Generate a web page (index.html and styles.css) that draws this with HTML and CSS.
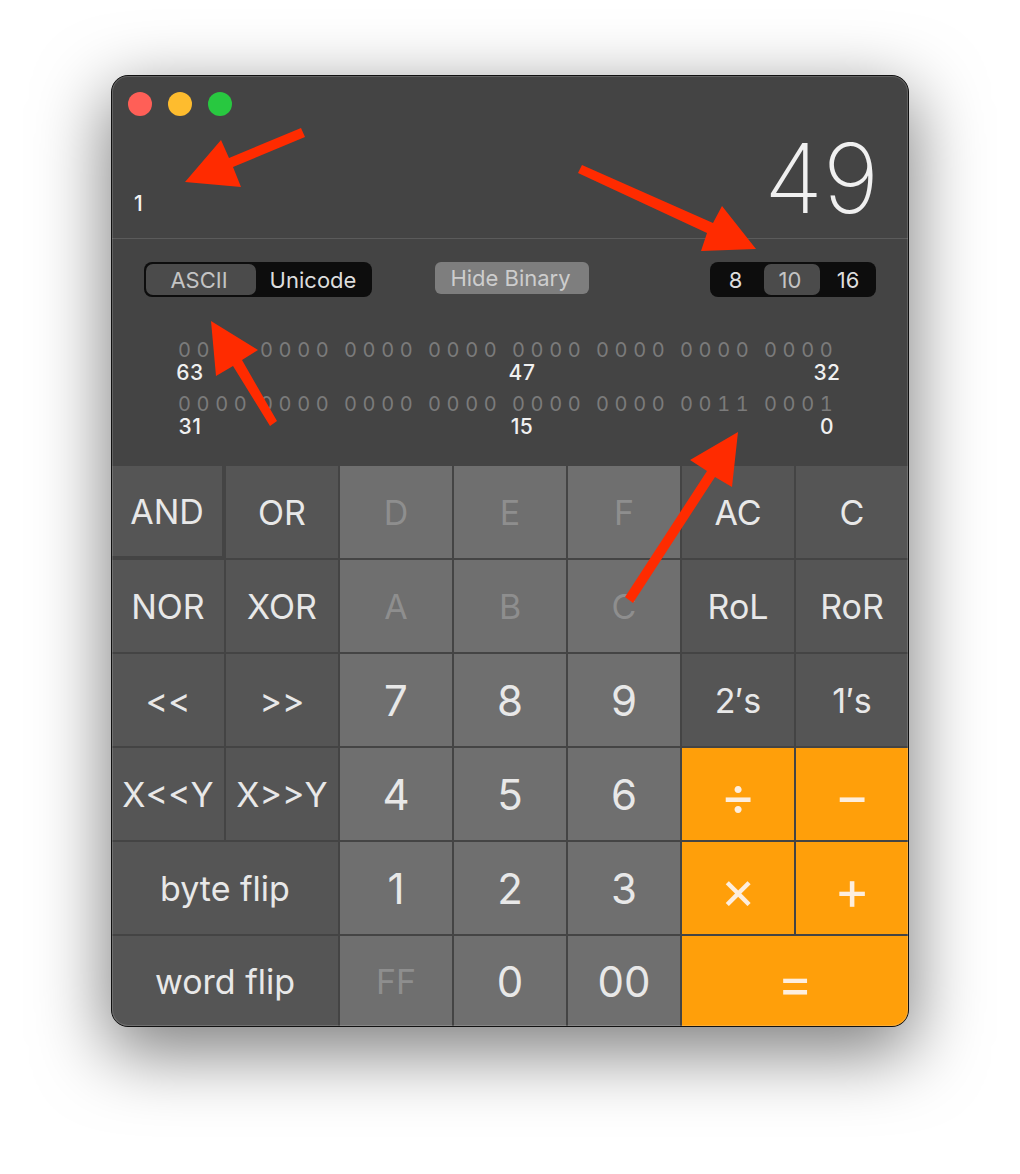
FILE: index.html
```html
<!DOCTYPE html>
<html lang="en">
<head>
<meta charset="utf-8">
<title>Calculator</title>
<link rel="stylesheet" href="styles.css">
</head>
<body>
<main class="window">
  <section class="panel">
    <header class="head">
      <div class="lights"><i class="light red"></i><i class="light amber"></i><i class="light green"></i></div>
      <div class="display"><span class="ascii">1</span><span class="value">49</span></div>
    </header>
    <div class="controls">
      <div class="seg seg-enc"><span class="opt on">ASCII</span><span class="opt">Unicode</span></div>
      <div class="hide">Hide Binary</div>
      <div class="seg seg-base"><span class="opt">8</span><span class="opt on">10</span><span class="opt">16</span></div>
    </div>
    <div class="bits">
      <div class="bitrow"><span class="group">0000</span><span class="group">0000</span><span class="group">0000</span><span class="group">0000</span><span class="group">0000</span><span class="group">0000</span><span class="group">0000</span><span class="group">0000</span></div>
      <div class="marks"><span>63</span><span>47</span><span>32</span></div>
      <div class="bitrow"><span class="group">0000</span><span class="group">0000</span><span class="group">0000</span><span class="group">0000</span><span class="group">0000</span><span class="group">0000</span><span class="group">0011</span><span class="group">0001</span></div>
      <div class="marks"><span>31</span><span>15</span><span>0</span></div>
    </div>
  </section>
  <section class="keys">
    <button class="key fn pressed">AND</button><button class="key fn">OR</button><button class="key num off">D</button><button class="key num off">E</button><button class="key num off">F</button><button class="key fn">AC</button><button class="key fn">C</button>
    <button class="key fn">NOR</button><button class="key fn">XOR</button><button class="key num off">A</button><button class="key num off">B</button><button class="key num off">C</button><button class="key fn">RoL</button><button class="key fn">RoR</button>
    <button class="key fn">&lt;&lt;</button><button class="key fn">&gt;&gt;</button><button class="key num big">7</button><button class="key num big">8</button><button class="key num big">9</button><button class="key fn">2′s</button><button class="key fn">1′s</button>
    <button class="key fn">X&lt;&lt;Y</button><button class="key fn">X&gt;&gt;Y</button><button class="key num big">4</button><button class="key num big">5</button><button class="key num big">6</button><button class="key op">÷</button><button class="key op">−</button>
    <button class="key fn wide">byte flip</button><button class="key num big">1</button><button class="key num big">2</button><button class="key num big">3</button><button class="key op">×</button><button class="key op">+</button>
    <button class="key fn wide">word flip</button><button class="key num off">FF</button><button class="key num big">0</button><button class="key num big">00</button><button class="key op wide">=</button>
  </section>
</main>
<svg class="arrows" viewBox="0 0 1020 1174" aria-hidden="true">
  <polygon points="301,128 305,137 233,167 241,187 185,182 221,140 229,158"/>
  <polygon points="582,165 578,173 707,233 701,251 756,249 722,206 713,223"/>
  <polygon points="211,321 258,350 242,360 277,421 270,426 233,366 216,376"/>
  <polygon points="738,432 690,460 707,471 625,597 633,603 715,477 732,487"/>
</svg>
</body>
</html>
```
FILE: styles.css
```css
* { box-sizing: border-box; }
html, body { margin: 0; height: 1174px; background: #fff; overflow: hidden; }
body { position: relative; padding: 75px 0 0 111px; font-family: Inter, "Liberation Sans", sans-serif; }

.window {
  position: relative;
  width: 798px;
  height: 952px;
  border: 1px solid #111;
  border-radius: 17px;
  overflow: hidden;
  background: #444;
  box-shadow: 0 22px 70px 4px rgba(0, 0, 0, .5);
}
.window::after {
  content: "";
  position: absolute;
  inset: 0;
  border-radius: 16px;
  box-shadow: inset 0 0 0 1px rgba(255, 255, 255, .16);
  pointer-events: none;
}

.panel { height: 390px; background: #444; }
.head { height: 163px; border-bottom: 1px solid #5b5b5b; }
.lights { display: flex; gap: 16px; padding: 16px 0 0 16px; }
.light { width: 24px; height: 24px; border-radius: 50%; }
.red { background: #ff5f57; }
.amber { background: #febc2e; }
.green { background: #28c840; }

.display { display: flex; justify-content: space-between; align-items: flex-end; height: 122px; padding: 0 29px 0 22px; color: #f0f0f0; }
.ascii { font-size: 21px; font-weight: 500; line-height: 24px; margin-bottom: 22px; color: #f4f4f4; }
.value { font-weight: 200; font-size: 96px; line-height: 110px; margin-bottom: 5px; }

.controls { display: flex; align-items: flex-start; margin-top: 23px; padding: 0 32px; color: #ddd; font-size: 22px; }
.seg { display: flex; height: 35px; padding: 2px; background: #0d0d0d; border-radius: 8px; }
.opt { display: flex; align-items: center; justify-content: center; border-radius: 7px; }
.opt.on { background: #4b4b4b; color: #c4c4c4; }
.seg-enc { width: 228px; }
.seg-enc .opt { width: 110px; padding-right: 4px; }
.seg-enc .opt + .opt { width: 114px; padding-right: 0; }
.hide { display: flex; align-items: center; justify-content: center; width: 154px; height: 32px; margin-left: 63px; padding-right: 3px; border-radius: 6px; background: #7e7e7e; color: #cdcdcd; }
.seg-base { width: 166px; margin-left: auto; }
.seg-base .opt { width: 52px; padding-right: 5px; }
.seg-base .opt.on { width: 56px; padding-right: 4px; }
.seg-base .opt:last-child { width: 54px; padding-right: 0; padding-left: 2px; }

.bits { margin: 41px 0 0 66px; }
.bitrow { display: flex; height: 24px; font-size: 20px; line-height: 24px; color: #7b7b7b; font-variant-numeric: tabular-nums; }
.group { width: 84px; letter-spacing: 5.6px; }
.group:first-child { width: 82px; }
.marks { display: grid; grid-template-columns: 332px 305px 28px; height: 22px; margin: 0 0 8px -2px; font-size: 21px; font-weight: 500; line-height: 22px; letter-spacing: .5px; color: #f0f0f0; }
.marks span { width: 28px; text-align: center; white-space: nowrap; }

.keys {
  display: grid;
  grid-template-columns: repeat(7, 112px);
  grid-template-rows: repeat(5, 92px) 90px;
  gap: 2px;
  background: #444;
}
.key { display: flex; align-items: center; justify-content: center; margin: 0; padding: 0; border: 0; border-radius: 0; font-family: inherit; font-size: 34px; color: #e8e8e8; }
.fn { background: #555; }
.num { background: #6f6f6f; }
.op { padding-top: 2px; background: #ff9f0a; color: #fdeede; font-size: 54px; }
.off { color: #8e8e8e; }
.big { font-size: 42px; }
.wide { grid-column: span 2; }
.pressed { margin: 0 0 2px 0; width: 110px; height: 90px; }

.arrows { position: absolute; inset: 0; width: 1020px; height: 1174px; fill: #ff2b00; pointer-events: none; }
```
